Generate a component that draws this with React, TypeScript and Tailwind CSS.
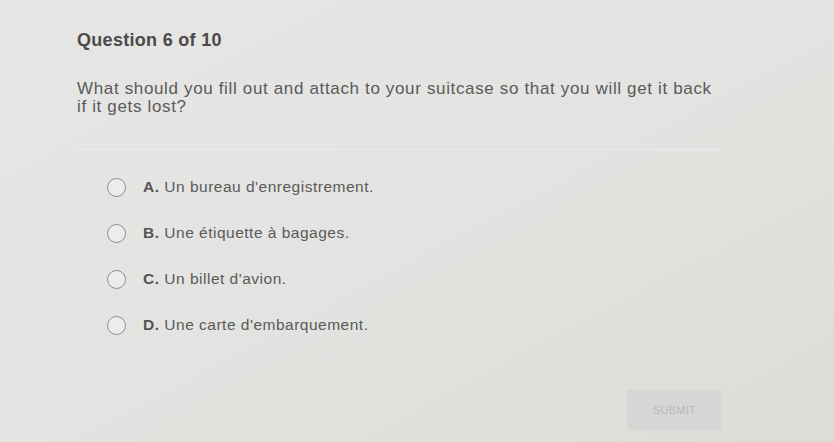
import React from 'react';

const options = [
  { letter: 'A.', text: "Un bureau d'enregistrement." },
  { letter: 'B.', text: 'Une étiquette à bagages.' },
  { letter: 'C.', text: "Un billet d'avion." },
  { letter: 'D.', text: "Une carte d'embarquement." },
];

export default function App() {
  return (
    <div className="w-[834px] h-[442px] overflow-hidden bg-gradient-to-br from-[#e6e6e4] via-[#e3e3e1] to-[#dcdcd8] text-[#555555] [font-family:'Liberation_Sans',Arial,sans-serif]">
      <div className="pl-[77px] pr-[110px] pt-[30px]">
        <h2 className="text-[18px] tracking-[0.3px] font-bold text-[#4a4a4a] leading-[20px]">Question 6 of 10</h2>
        <p className="mt-[30px] max-w-[640px] text-[17px] tracking-[0.65px] leading-[18px] text-[#5a5a5a]">
          What should you fill out and attach to your suitcase so that you will get it back if it gets lost?
        </p>
        <div className="mt-[33px] border-t border-[#ececea]" />
        <div className="mt-[28px] pl-[30px] flex flex-col gap-[28px]">
          {options.map((o) => (
            <div key={o.letter} className="flex items-center gap-[17px] h-[18px]">
              <span className="w-[19px] h-[19px] rounded-full border-[1.5px] border-[#8e8e8e] bg-[#ececea]" />
              <span className="text-[15.5px] tracking-[0.5px] text-[#5a5a5a]">
                <span className="font-bold text-[#555555]">{o.letter}</span> {o.text}
              </span>
            </div>
          ))}
        </div>
      </div>
      <div className="flex justify-end pr-[112px] mt-[56px]">
        <button className="w-[95px] h-[40px] rounded-[3px] bg-[#d6d6d4] text-[11px] tracking-wide text-[#b9b9b7]">
          SUBMIT
        </button>
      </div>
    </div>
  );
}
